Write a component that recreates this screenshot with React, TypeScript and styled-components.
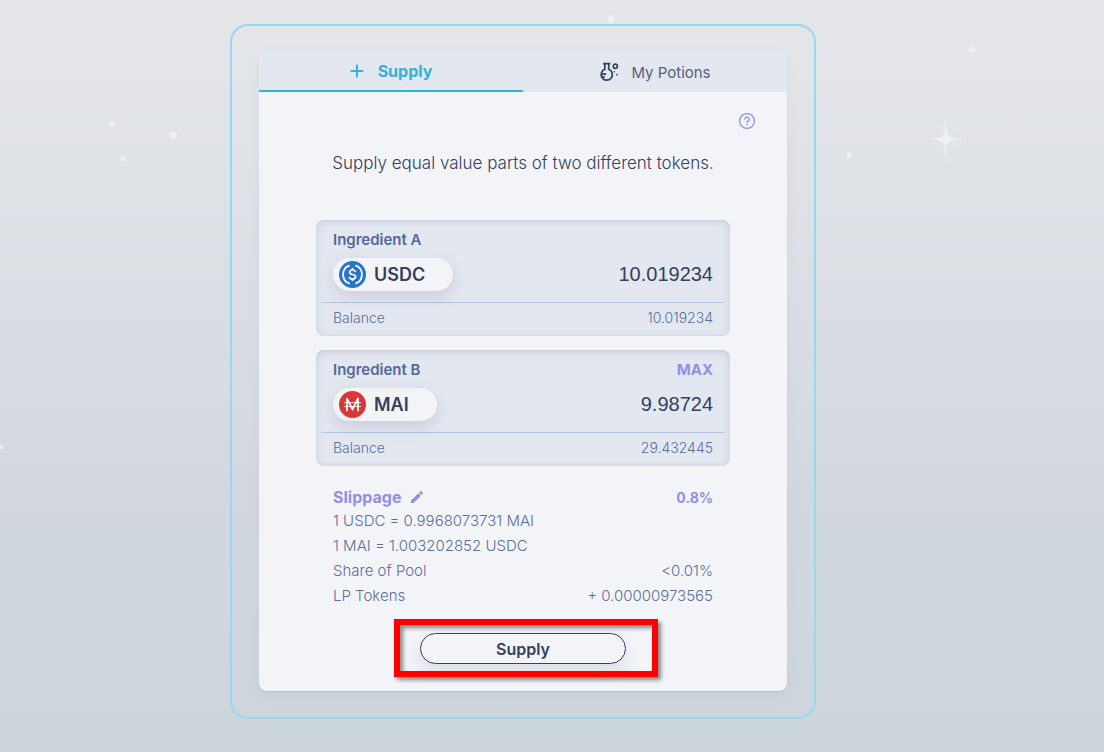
import React, { useState } from 'react';
import styled, { createGlobalStyle } from 'styled-components';

const color = {
  ink: '#33415f',
  muted: '#56689a',
  slate: '#5b6f9c',
  cyan: '#2fb4dc',
  violet: '#9190e6',
  surface: '#f3f4f8',
  well: '#e3e7f0',
  line: '#b4c4df',
};

const GlobalStyle = createGlobalStyle`
  * { box-sizing: border-box; }
  body {
    margin: 0;
    font-family: Inter, "Open Sans", sans-serif;
    color: ${color.ink};
  }
  button, input { font: inherit; color: inherit; margin: 0; padding: 0; border: 0; background: none; }
  button { cursor: pointer; }
`;

const Page = styled.main`
  position: relative;
  display: flex;
  justify-content: center;
  align-items: flex-start;
  min-height: 100vh;
  padding: 24px 58px 33px 0;
  background: linear-gradient(180deg, #e5e6ea 0%, #dfe2e7 22%, #d9dde3 45%, #d3d8e0 65%, #ccd4dc 100%);
`;

const Sky = styled.svg`
  position: absolute;
  inset: 0;
  width: 100%;
  height: 100%;
  pointer-events: none;
`;

const Frame = styled.div`
  position: relative;
  width: 100%;
  max-width: 586px;
  padding: 26px 27px;
  border: 2px solid #94d9ee;
  border-radius: 18px;
`;

const Card = styled.section`
  border-radius: 0 0 8px 8px;
  background: ${color.surface};
  box-shadow: 0 1px 1px rgba(60, 80, 120, 0.14), 0 4px 16px rgba(60, 80, 120, 0.04);
`;

const Tabs = styled.nav`
  display: grid;
  grid-template-columns: 1fr 1fr;
`;

const Tab = styled.button<{ $active?: boolean }>`
  display: flex;
  align-items: center;
  justify-content: center;
  gap: ${(p) => (p.$active ? 14 : 12)}px;
  height: 40px;
  background: ${color.well};
  border-bottom: ${(p) => (p.$active ? `2px solid ${color.cyan}` : '0')};
  color: ${(p) => (p.$active ? color.cyan : '#56617d')};
  font-size: ${(p) => (p.$active ? 16 : 15)}px;
  font-weight: ${(p) => (p.$active ? 700 : 400)};
`;

const Body = styled.div`
  display: flex;
  flex-direction: column;
  padding: 20px 31px 27px;
`;

const HelpButton = styled.button`
  display: flex;
  align-self: flex-end;
  width: 18px;
  height: 18px;
  color: ${color.violet};
`;

const Lead = styled.h1`
  margin: 21px 0 45px;
  font-size: 17px;
  font-weight: 300;
  line-height: 24px;
  text-align: center;
`;

const Form = styled.form`
  display: flex;
  flex-direction: column;
  padding: 0 26px;
`;

const Wells = styled.div`
  display: flex;
  flex-direction: column;
  gap: 14px;
`;

const Well = styled.section`
  padding: 5px 6px 4px;
  border-radius: 8px;
  background: ${color.well};
  box-shadow: inset 0 2px 8px rgba(70, 90, 120, 0.17), inset 0 0 2px rgba(70, 90, 120, 0.08);
`;

const Row = styled.div<{ $height: number; $inset?: number }>`
  display: flex;
  align-items: center;
  justify-content: space-between;
  min-height: ${(p) => p.$height}px;
  padding: 0 ${(p) => p.$inset ?? 11}px;
`;

const WellLabel = styled.label`
  color: ${color.muted};
  font-size: 15px;
  font-weight: 600;
`;

const MaxButton = styled.button`
  color: ${color.violet};
  font-size: 15px;
  font-weight: 700;
`;

const AmountRow = styled.div`
  display: flex;
  align-items: center;
  justify-content: space-between;
  padding: 5px 11px 11px;
  border-bottom: 1px solid ${color.line};
`;

const TokenPill = styled.button`
  display: flex;
  align-items: center;
  gap: 8px;
  height: 33px;
  padding: 0 28px 0 6px;
  border-radius: 17px;
  background: ${color.surface};
  box-shadow: 0 6px 16px rgba(60, 80, 120, 0.16);
  font-size: 18px;
  font-weight: 600;
`;

const AmountInput = styled.input`
  flex: 1;
  min-width: 0;
  padding-bottom: 2px;
  outline: 0;
  font-family: "Liberation Sans", Arial, sans-serif;
  font-size: 20px;
  line-height: 24px;
  text-align: right;
`;

const Small = styled.span<{ $size?: number }>`
  color: ${color.slate};
  font-size: ${(p) => p.$size ?? 15}px;
  font-weight: 300;
`;

const Details = styled.div`
  margin: 20px 0 25px;
`;

const Slippage = styled.button`
  display: flex;
  align-items: center;
  gap: 8px;
  color: ${color.violet};
  font-size: 16px;
  font-weight: 700;
`;

const SlippageValue = styled.span`
  color: ${color.violet};
  font-size: 14px;
  font-weight: 700;
`;

const Action = styled.div`
  position: relative;
  align-self: center;
  width: 206px;
`;

const SupplyButton = styled.button`
  display: block;
  width: 100%;
  height: 31px;
  border: 1px solid ${color.ink};
  border-radius: 16px;
  background: ${color.surface};
  box-shadow: 0 8px 16px rgba(60, 80, 120, 0.13);
  font-size: 16px;
  font-weight: 600;
`;

const Highlight = styled.div`
  position: absolute;
  inset: -14px -32px -13px -26px;
  border: 6px solid #ff0000;
  box-shadow: 3px 3px 4px rgba(0, 0, 0, 0.45), inset 3px 3px 4px rgba(0, 0, 0, 0.45);
  pointer-events: none;
`;

const PlusIcon = () => (
  <svg width="14" height="14" viewBox="0 0 14 14" fill="none" stroke="currentColor" strokeWidth="2" strokeLinecap="round" aria-hidden>
    <path d="M7 1.5v11M1.500 7h11" />
  </svg>
);

const FlaskIcon = () => (
  <svg width="20" height="20" viewBox="0 0 20 20" fill="none" stroke={color.ink} strokeWidth="1.7" aria-hidden>
    <path d="M4 1.7h7.4M5.8 1.7v5.6a5.6 5.6 0 1 0 3.9 0V1.7" />
    <path d="M2 12.2h5.2M2 15h4" />
    <circle cx="16.3" cy="4.3" r="2.1" />
    <circle cx="15.2" cy="9.7" r=".8" fill={color.ink} stroke="none" />
    <circle cx="18" cy="12.6" r=".9" fill={color.ink} stroke="none" />
  </svg>
);

const HelpIcon = () => (
  <svg width="18" height="18" viewBox="0 0 18 18" fill="none" stroke="currentColor" strokeWidth="1.3" strokeLinecap="round" aria-hidden>
    <circle cx="9" cy="9" r="7.4" />
    <path d="M6.9 7.2a2.1 2.1 0 1 1 3.1 1.9c-.7.4-1 .7-1 1.4" />
    <circle cx="9" cy="12.5" r=".4" fill="currentColor" strokeWidth=".8" />
  </svg>
);

const PencilIcon = () => (
  <svg width="16" height="16" viewBox="0 0 24 24" fill="currentColor" aria-hidden>
    <path d="M3 17.25V21h3.75L17.81 9.94l-3.75-3.75L3 17.25zM20.71 7.04a1 1 0 0 0 0-1.41l-2.34-2.34a1 1 0 0 0-1.41 0l-1.83 1.83 3.75 3.75 1.83-1.83z" />
  </svg>
);

const UsdcIcon = () => (
  <svg width="27" height="27" viewBox="0 0 32 32" fill="none" stroke="#fff" aria-hidden>
    <circle cx="16" cy="16" r="16" fill="#2775ca" stroke="none" />
    <path d="M12.6 5.2a11.4 11.4 0 0 0 0 21.6M19.4 5.2a11.4 11.4 0 0 1 0 21.6" strokeWidth="2.1" />
    <path d="M19.5 13.2c-.3-1.7-1.6-2.5-3.5-2.5-2.1 0-3.4 1-3.4 2.6 0 1.8 1.4 2.3 3.5 2.7 2.3.4 3.6 1 3.6 2.8 0 1.7-1.5 2.7-3.6 2.7-2.2 0-3.6-.9-3.9-2.8" strokeWidth="2" />
    <path d="M16 8.3v2.6M16 21.2v2.6" strokeWidth="2" />
  </svg>
);

const MaiIcon = () => (
  <svg width="27" height="27" viewBox="0 0 27 27" fill="none" stroke="#fff" aria-hidden>
    <circle cx="13.5" cy="13.5" r="13.5" fill="#db3737" stroke="none" />
    <path d="M8 20.200V7.500L13.500 18.500 19 7.500V20.200" strokeWidth="1.700" strokeLinejoin="round" />
    <path d="M5 11.700h17M5 15.500h17" strokeWidth="1" opacity=".85" />
  </svg>
);

const stars = [
  [611, 19, 3], [972, 50, 3], [112, 124, 2], [173, 135, 3], [123, 159, 2], [849, 155, 2], [1, 447, 2],
];

const Stars = () => (
  <Sky aria-hidden>
    {stars.map(([x, y, r]) => (
      <g key={`${x}-${y}`} fill="#f2f6f9">
        <circle cx={x} cy={y} r={r + 1} opacity=".35" />
        <circle cx={x} cy={y} r={r} opacity=".65" />
      </g>
    ))}
    <g fill="#eff4f7">
      <path d="M945 111L947 134 951 138 965 139 951 141 947 145 946 166 944 145 941 141 930 139 941 137 944 130Z" opacity=".5" />
      <path d="M946 124L948 134 954 139 946 144 937 139 944 136Z" opacity=".75" />
      <circle cx="948" cy="139" r="13" fill="none" stroke="#eff4f7" strokeDasharray="9 7" opacity=".35" />
    </g>
  </Sky>
);

interface IngredientProps {
  id: string;
  label: string;
  token: string;
  icon: React.ReactNode;
  initial: string;
  balance: string;
  max?: boolean;
}

function Ingredient({ id, label, token, icon, initial, balance, max }: IngredientProps) {
  const [amount, setAmount] = useState(initial);
  return (
    <Well>
      <Row $height={28}>
        <WellLabel htmlFor={id}>{label}</WellLabel>
        {max && <MaxButton type="button" onClick={() => setAmount(balance)}>MAX</MaxButton>}
      </Row>
      <AmountRow>
        <TokenPill type="button">
          {icon}
          {token}
        </TokenPill>
        <AmountInput id={id} inputMode="decimal" value={amount} onChange={(e) => setAmount(e.target.value)} />
      </AmountRow>
      <Row $height={29}>
        <Small $size={14}>Balance</Small>
        <Small $size={14}>{balance}</Small>
      </Row>
    </Well>
  );
}

export default function App() {
  return (
    <Page>
      <GlobalStyle />
      <Stars />
      <Frame>
        <Card>
          <Tabs>
            <Tab type="button" $active>
              <PlusIcon />
              Supply
            </Tab>
            <Tab type="button">
              <FlaskIcon />
              My Potions
            </Tab>
          </Tabs>
          <Body>
            <HelpButton type="button" aria-label="Help">
              <HelpIcon />
            </HelpButton>
            <Lead>Supply equal value parts of two different tokens.</Lead>
            <Form onSubmit={(e) => e.preventDefault()}>
              <Wells>
                <Ingredient id="amount-a" label="Ingredient A" token="USDC" icon={<UsdcIcon />} initial="10.019234" balance="10.019234" />
                <Ingredient id="amount-b" label="Ingredient B" token="MAI" icon={<MaiIcon />} initial="9.98724" balance="29.432445" max />
              </Wells>
              <Details>
                <Row $height={22} $inset={17}>
                  <Slippage type="button">
                    Slippage
                    <PencilIcon />
                  </Slippage>
                  <SlippageValue>0.8%</SlippageValue>
                </Row>
                <Row $height={25} $inset={17}>
                  <Small>1 USDC = 0.9968073731 MAI</Small>
                </Row>
                <Row $height={25} $inset={17}>
                  <Small>1 MAI = 1.003202852 USDC</Small>
                </Row>
                <Row $height={25} $inset={17}>
                  <Small>Share of Pool</Small>
                  <Small>&lt;0.01%</Small>
                </Row>
                <Row $height={25} $inset={17}>
                  <Small>LP Tokens</Small>
                  <Small>+ 0.00000973565</Small>
                </Row>
              </Details>
              <Action>
                <SupplyButton type="submit">Supply</SupplyButton>
                <Highlight />
              </Action>
            </Form>
          </Body>
        </Card>
      </Frame>
    </Page>
  );
}
